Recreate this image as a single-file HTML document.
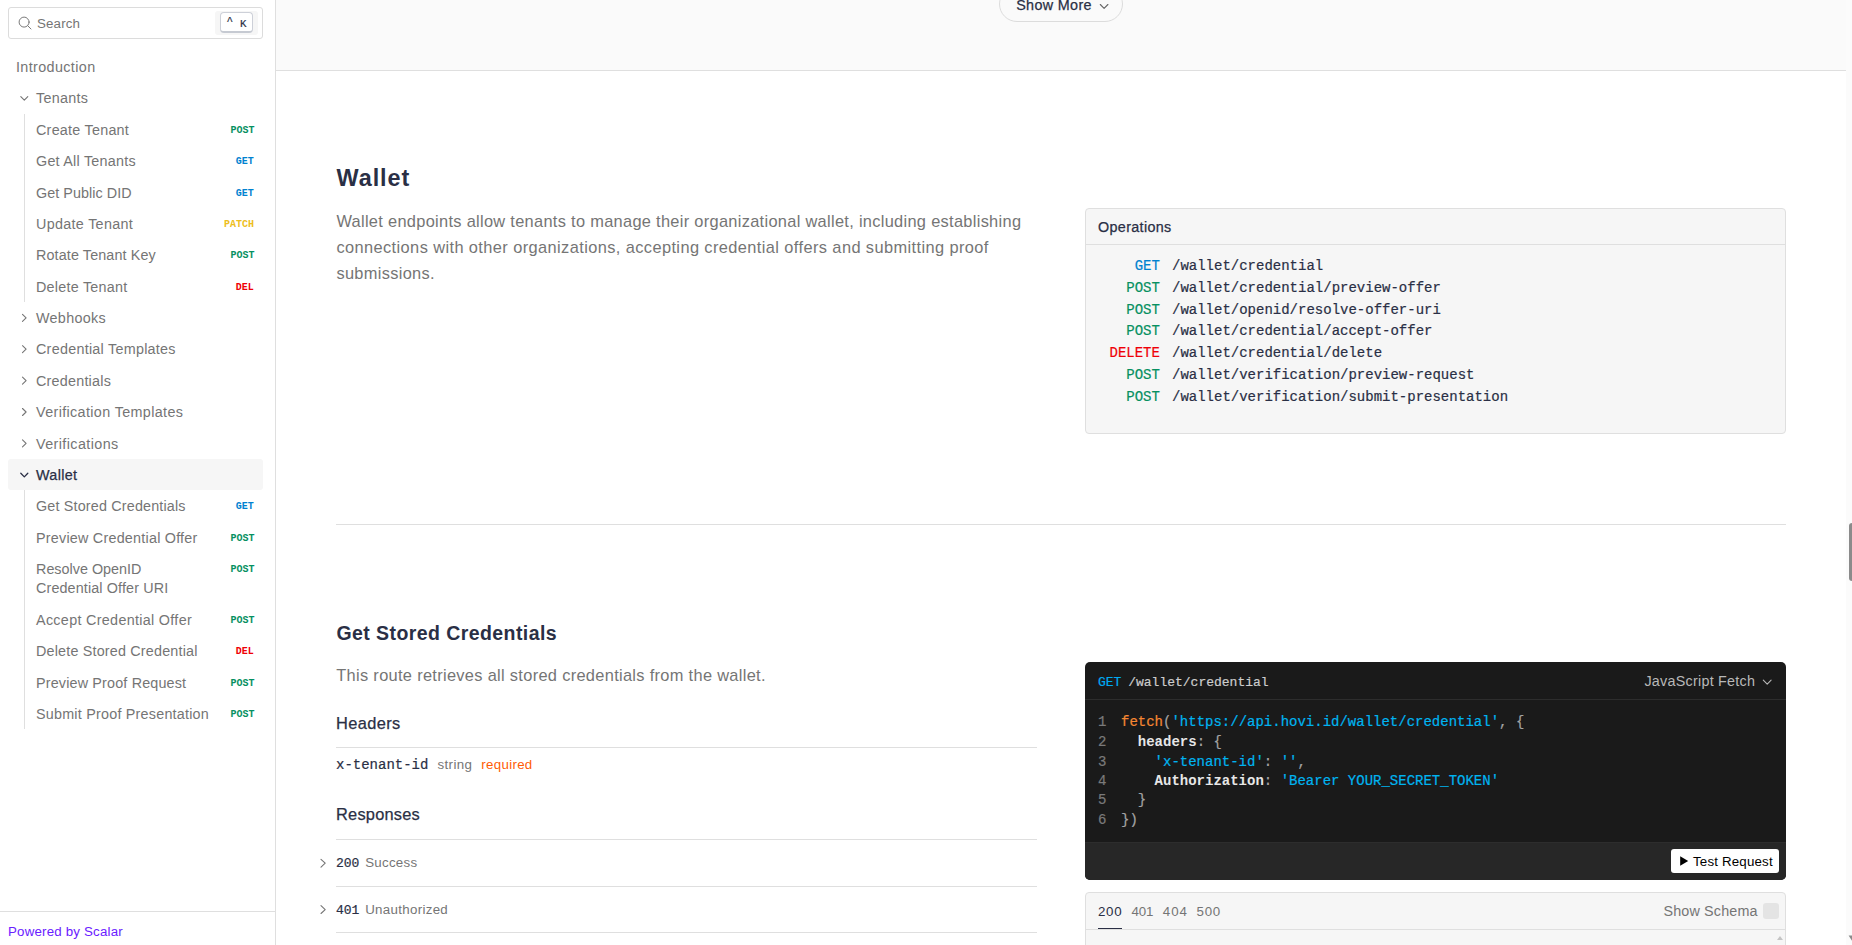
<!DOCTYPE html>
<html lang="en">
<head>
<meta charset="utf-8">
<title>Hovi API Reference</title>
<style>
*{box-sizing:border-box;margin:0;padding:0}
html,body{width:1852px;height:945px;overflow:hidden;background:#fff}
body{position:relative;font-family:"Liberation Sans",sans-serif;color:#2a2f45}
.t{position:absolute;white-space:pre;line-height:20px;height:20px}
.m{font-family:"Liberation Mono",monospace;-webkit-text-stroke:0.2px}
.m.b,.m .b{-webkit-text-stroke:0}
.b{font-weight:bold}
.box{position:absolute}
.hr{position:absolute;height:1px;background:#dfdfdf}
svg{position:absolute;overflow:visible}
#sidebar{left:0;top:0;width:276px;height:945px;border-right:1px solid #dfdfdf;background:#fff}
#search{left:8px;top:7px;width:255px;height:32px;border:1px solid #dcdcdc;border-radius:3px;background:#fff}
#kbdwrap{left:215px;top:11px;width:43px;height:24px;background:#f6f6f6;border-radius:3px}
#kbd{left:220px;top:12px;width:33px;height:21px;background:#fff;border:1px solid #cdd0d8;border-bottom:2px solid #c6cad2;border-radius:4px}
#active{left:8px;top:459.3px;width:255px;height:30.7px;background:#f6f6f6;border-radius:3px}
.vl{position:absolute;left:24px;width:1px;background:#dfdfdf}
#foot{left:0;top:911px;width:275px;height:1px;background:#dfdfdf}
#topgray{left:276px;top:0;width:1570px;height:71px;background:#fafafa;border-bottom:1px solid #dfdfdf}
#showmore{left:999px;top:-14px;width:124px;height:36px;border:1px solid #dcdcdc;border-radius:18px;background:#fafafa}
#ops{left:1085px;top:208px;width:701px;height:226px;background:#f6f6f6;border:1px solid #dfdfdf;border-radius:4px}
#opsline{left:1086px;top:244px;width:699px}
#code{left:1085px;top:662px;width:701px;height:218px;background:#1a1a1a;border-radius:5px;overflow:hidden}
#codehr{left:0;top:37px;width:701px;height:1px;background:#2d2d2d;position:absolute}
#codefoot{left:0;top:180px;width:701px;height:38px;background:#272727;border-top:1px solid #2d2d2d;position:absolute}
#testbtn{left:1671px;top:849px;width:108px;height:24px;background:#fff;border-radius:3px}
#resp{left:1085px;top:892px;width:701px;height:70px;background:#f6f6f6;border:1px solid #dfdfdf;border-radius:4px}
#resphr{left:1086px;top:929px;width:699px}
#tabul{left:1098px;top:928px;width:24px;height:1px;background:#2a2f45}
#chk{left:1763px;top:903px;width:16px;height:16px;background:#e4e4e4;border-radius:3px}
#sbtrack{left:1846px;top:0;width:6px;height:945px;background:#fbfbfb}
#sbthumb{left:1849px;top:523px;width:8px;height:58px;background:#8b8b8b;border-radius:3px}
</style>
</head>
<body>

<nav id="sidebar" class="box">
<div id="search" class="box"></div><div id="kbdwrap" class="box"></div><div id="kbd" class="box"></div>
<svg style="left:17.6px;top:16.4px" width="14" height="14" viewBox="0 0 14 14" fill="none" stroke="#7a7a7a" stroke-width="1" stroke-linecap="round"><circle cx="6.1" cy="6.1" r="5"/><path d="M9.8 9.8L13 13"/></svg>
<div id="active" class="box"></div>
<div class="vl" style="top:114px;height:188px"></div><div class="vl" style="top:490px;height:239px"></div>
<svg style="left:0;top:0" width="1" height="1"><path d="M20.80 96.59L24.30 100.19L27.80 96.59" fill="none" stroke="#757575" stroke-width="1.1" stroke-linecap="round" stroke-linejoin="round"/></svg>
<svg style="left:0;top:0" width="1" height="1"><path d="M22.50 314.32L26.10 317.82L22.50 321.32" fill="none" stroke="#757575" stroke-width="1.1" stroke-linecap="round" stroke-linejoin="round"/></svg>
<svg style="left:0;top:0" width="1" height="1"><path d="M22.50 345.71L26.10 349.21L22.50 352.71" fill="none" stroke="#757575" stroke-width="1.1" stroke-linecap="round" stroke-linejoin="round"/></svg>
<svg style="left:0;top:0" width="1" height="1"><path d="M22.50 377.10L26.10 380.60L22.50 384.10" fill="none" stroke="#757575" stroke-width="1.1" stroke-linecap="round" stroke-linejoin="round"/></svg>
<svg style="left:0;top:0" width="1" height="1"><path d="M22.50 408.49L26.10 411.99L22.50 415.49" fill="none" stroke="#757575" stroke-width="1.1" stroke-linecap="round" stroke-linejoin="round"/></svg>
<svg style="left:0;top:0" width="1" height="1"><path d="M22.50 439.88L26.10 443.38L22.50 446.88" fill="none" stroke="#757575" stroke-width="1.1" stroke-linecap="round" stroke-linejoin="round"/></svg>
<svg style="left:0;top:0" width="1" height="1"><path d="M20.80 473.27L24.30 476.87L27.80 473.27" fill="none" stroke="#2a2f45" stroke-width="1.3" stroke-linecap="round" stroke-linejoin="round"/></svg>
<span class="t" style="left:37.00px;top:14.00px;font-size:13.32px;letter-spacing:0.159px;color:#757575">Search</span>
<span class="t m" style="left:226.40px;top:11.00px;font-size:11px;color:#2a2f45">^</span>
<span class="t m" style="left:240.00px;top:14.00px;font-size:10.8px;letter-spacing:-0.484px;color:#2a2f45">K</span>
<div id="navitems">
<span class="t" style="left:16.00px;top:57.00px;font-size:14.35px;letter-spacing:0.38px;color:#757575">Introduction</span>
<span class="t" style="left:36.00px;top:88.00px;font-size:14.35px;letter-spacing:0.299px;color:#757575">Tenants</span>
<span class="t" style="left:36.00px;top:120.00px;font-size:14.35px;letter-spacing:0.248px;color:#757575">Create Tenant</span>
<span class="t m b" style="transform:scaleX(0.9089);transform-origin:100% 50%;left:227.59px;top:119.60px;font-size:11px;color:#069061">POST</span>
<span class="t" style="left:36.00px;top:151.00px;font-size:14.35px;letter-spacing:0.243px;color:#757575">Get All Tenants</span>
<span class="t m b" style="transform:scaleX(0.9085);transform-origin:100% 50%;left:234.19px;top:150.60px;font-size:11px;color:#0082d0">GET</span>
<span class="t" style="left:36.00px;top:183.00px;font-size:14.35px;letter-spacing:0.054px;color:#757575">Get Public DID</span>
<span class="t m b" style="transform:scaleX(0.9085);transform-origin:100% 50%;left:234.19px;top:182.60px;font-size:11px;color:#0082d0">GET</span>
<span class="t" style="left:36.00px;top:214.00px;font-size:14.35px;letter-spacing:0.309px;color:#757575">Update Tenant</span>
<span class="t m b" style="transform:scaleX(0.9087);transform-origin:100% 50%;left:220.98px;top:213.60px;font-size:11px;color:#edbe20">PATCH</span>
<span class="t" style="left:36.00px;top:245.00px;font-size:14.35px;letter-spacing:0.125px;color:#757575">Rotate Tenant Key</span>
<span class="t m b" style="transform:scaleX(0.9089);transform-origin:100% 50%;left:227.59px;top:244.60px;font-size:11px;color:#069061">POST</span>
<span class="t" style="left:36.00px;top:277.00px;font-size:14.35px;letter-spacing:0.245px;color:#757575">Delete Tenant</span>
<span class="t m b" style="transform:scaleX(0.9085);transform-origin:100% 50%;left:234.19px;top:276.60px;font-size:11px;color:#ef0006">DEL</span>
<span class="t" style="left:36.00px;top:308.00px;font-size:14.35px;letter-spacing:0.307px;color:#757575">Webhooks</span>
<span class="t" style="left:36.00px;top:339.00px;font-size:14.35px;letter-spacing:0.265px;color:#757575">Credential Templates</span>
<span class="t" style="left:36.00px;top:371.00px;font-size:14.35px;letter-spacing:0.226px;color:#757575">Credentials</span>
<span class="t" style="left:36.00px;top:402.00px;font-size:14.35px;letter-spacing:0.366px;color:#757575">Verification Templates</span>
<span class="t" style="left:36.00px;top:434.00px;font-size:14.35px;letter-spacing:0.404px;color:#757575">Verifications</span>
<span class="t" style="left:36.00px;top:465.00px;font-size:14.35px;letter-spacing:0.328px;color:#2a2f45;-webkit-text-stroke:0.25px #2a2f45">Wallet</span>
<span class="t" style="left:36.00px;top:496.00px;font-size:14.35px;letter-spacing:0.173px;color:#757575">Get Stored Credentials</span>
<span class="t m b" style="transform:scaleX(0.9085);transform-origin:100% 50%;left:234.19px;top:495.60px;font-size:11px;color:#0082d0">GET</span>
<span class="t" style="left:36.00px;top:528.00px;font-size:14.35px;letter-spacing:0.232px;color:#757575">Preview Credential Offer</span>
<span class="t m b" style="transform:scaleX(0.9089);transform-origin:100% 50%;left:227.59px;top:527.60px;font-size:11px;color:#069061">POST</span>
<span class="t" style="left:36.00px;top:559.00px;font-size:14.35px;letter-spacing:0.017px;color:#757575">Resolve OpenID</span>
<span class="t m b" style="transform:scaleX(0.9089);transform-origin:100% 50%;left:227.59px;top:558.60px;font-size:11px;color:#069061">POST</span>
<span class="t" style="left:36.00px;top:578.00px;font-size:14.35px;letter-spacing:0.129px;color:#757575">Credential Offer URI</span>
<span class="t" style="left:36.00px;top:610.00px;font-size:14.35px;letter-spacing:0.314px;color:#757575">Accept Credential Offer</span>
<span class="t m b" style="transform:scaleX(0.9089);transform-origin:100% 50%;left:227.59px;top:609.60px;font-size:11px;color:#069061">POST</span>
<span class="t" style="left:36.00px;top:641.00px;font-size:14.35px;letter-spacing:0.186px;color:#757575">Delete Stored Credential</span>
<span class="t m b" style="transform:scaleX(0.9085);transform-origin:100% 50%;left:234.19px;top:640.60px;font-size:11px;color:#ef0006">DEL</span>
<span class="t" style="left:36.00px;top:673.00px;font-size:14.35px;letter-spacing:0.17px;color:#757575">Preview Proof Request</span>
<span class="t m b" style="transform:scaleX(0.9089);transform-origin:100% 50%;left:227.59px;top:672.60px;font-size:11px;color:#069061">POST</span>
<span class="t" style="left:36.00px;top:704.00px;font-size:14.35px;letter-spacing:0.223px;color:#757575">Submit Proof Presentation</span>
<span class="t m b" style="transform:scaleX(0.9089);transform-origin:100% 50%;left:227.59px;top:703.60px;font-size:11px;color:#069061">POST</span>
</div>
<div id="foot" class="box"></div>
<span class="t" style="left:8.00px;top:922.00px;font-size:13.32px;letter-spacing:0.184px;color:#6a20ff">Powered by Scalar</span>
</nav>
<main>
<div id="topgray" class="box"></div><div id="showmore" class="box"></div>
<svg style="left:0;top:0" width="1" height="1"><path d="M1100.3 4.5L1104.1 8.3L1107.9 4.5" fill="none" stroke="#666" stroke-width="1.1" stroke-linecap="round" stroke-linejoin="round"/></svg>
<div id="ops" class="box"></div><div id="opsline" class="hr"></div>
<div class="hr" style="left:336px;top:524px;width:1450px"></div>
<div class="hr" style="left:336px;top:747px;width:701px"></div>
<div class="hr" style="left:336px;top:839px;width:701px"></div>
<div class="hr" style="left:336px;top:886px;width:701px"></div>
<div class="hr" style="left:336px;top:932px;width:701px"></div>
<svg style="left:0;top:0" width="1" height="1"><path d="M321 859.3L325.2 863.2L321 867.1" fill="none" stroke="#757575" stroke-width="1.1" stroke-linecap="round" stroke-linejoin="round"/></svg>
<svg style="left:0;top:0" width="1" height="1"><path d="M321 905.7L325.2 909.6L321 913.5" fill="none" stroke="#757575" stroke-width="1.1" stroke-linecap="round" stroke-linejoin="round"/></svg>
<div id="code" class="box"><div id="codehr"></div><div id="codefoot"></div></div>
<div id="testbtn" class="box"></div>
<svg style="left:0;top:0" width="1" height="1"><path d="M1680.2 856.2L1688.2 861L1680.2 865.8Z" fill="#000"/></svg>
<svg style="left:0;top:0" width="1" height="1"><path d="M1763.3 680.2L1767.2 684.1L1771.1 680.2" fill="none" stroke="#b8b8b8" stroke-width="1.1" stroke-linecap="round" stroke-linejoin="round"/></svg>
<div id="resp" class="box"></div><div id="resphr" class="hr"></div><div id="tabul" class="box"></div><div id="chk" class="box"></div>
<svg style="left:0;top:0" width="1" height="1"><path d="M1777 940L1780 936L1783 940Z" fill="#c4c4c4"/></svg>
<span class="t" style="left:1016.20px;top:-5.00px;font-size:14.35px;letter-spacing:0.344px;color:#2a2f45;-webkit-text-stroke:0.25px #2a2f45">Show More</span>
<span class="t b" style="left:336.60px;top:168.00px;font-size:23.4px;letter-spacing:0.922px;color:#2a2f45">Wallet</span>
<span class="t" style="left:336.40px;top:211.00px;font-size:16.4px;letter-spacing:0.301px;color:#757575">Wallet endpoints allow tenants to manage their organizational wallet, including establishing</span>
<span class="t" style="left:336.40px;top:237.00px;font-size:16.4px;letter-spacing:0.396px;color:#757575">connections with other organizations, accepting credential offers and submitting proof</span>
<span class="t" style="left:336.40px;top:263.00px;font-size:16.4px;letter-spacing:0.311px;color:#757575">submissions.</span>
<span class="t" style="left:1098.00px;top:217.00px;font-size:14.35px;letter-spacing:0.345px;color:#2a2f45;-webkit-text-stroke:0.25px #2a2f45">Operations</span>
<span class="t m" style="left:1134.70px;top:256.00px;font-size:14px;letter-spacing:-0.005px;color:#0082d0">GET</span>
<span class="t m" style="left:1172.00px;top:256.00px;font-size:14px;color:#2a2f45">/wallet/credential</span>
<span class="t m" style="left:1126.29px;top:278.00px;font-size:14px;color:#069061">POST</span>
<span class="t m" style="left:1172.00px;top:278.00px;font-size:14px;color:#2a2f45">/wallet/credential/preview-offer</span>
<span class="t m" style="left:1126.29px;top:300.00px;font-size:14px;color:#069061">POST</span>
<span class="t m" style="left:1172.00px;top:300.00px;font-size:14px;color:#2a2f45">/wallet/openid/resolve-offer-uri</span>
<span class="t m" style="left:1126.29px;top:321.00px;font-size:14px;color:#069061">POST</span>
<span class="t m" style="left:1172.00px;top:321.00px;font-size:14px;color:#2a2f45">/wallet/credential/accept-offer</span>
<span class="t m" style="left:1109.50px;top:343.00px;font-size:14px;color:#ef0006">DELETE</span>
<span class="t m" style="left:1172.00px;top:343.00px;font-size:14px;color:#2a2f45">/wallet/credential/delete</span>
<span class="t m" style="left:1126.29px;top:365.00px;font-size:14px;color:#069061">POST</span>
<span class="t m" style="left:1172.00px;top:365.00px;font-size:14px;color:#2a2f45">/wallet/verification/preview-request</span>
<span class="t m" style="left:1126.29px;top:387.00px;font-size:14px;color:#069061">POST</span>
<span class="t m" style="left:1172.00px;top:387.00px;font-size:14px;color:#2a2f45">/wallet/verification/submit-presentation</span>
<span class="t b" style="left:336.40px;top:623.00px;font-size:19.5px;letter-spacing:0.427px;color:#2a2f45">Get Stored Credentials</span>
<span class="t" style="left:336.30px;top:665.00px;font-size:16.4px;letter-spacing:0.311px;color:#757575">This route retrieves all stored credentials from the wallet.</span>
<span class="t" style="left:336.00px;top:713.00px;font-size:16.4px;letter-spacing:0.386px;color:#2a2f45;-webkit-text-stroke:0.25px #2a2f45">Headers</span>
<span class="t m" style="left:336.00px;top:755.00px;font-size:14px;color:#2a2f45">x-tenant-id</span>
<span class="t" style="left:437.40px;top:755.00px;font-size:13.32px;letter-spacing:0.409px;color:#757575">string</span>
<span class="t" style="left:481.30px;top:755.00px;font-size:13.32px;letter-spacing:0.305px;color:#ff5c05">required</span>
<span class="t" style="left:336.00px;top:804.00px;font-size:16.4px;letter-spacing:0.219px;color:#2a2f45;-webkit-text-stroke:0.25px #2a2f45">Responses</span>
<span class="t m" style="left:336.00px;top:854.00px;font-size:13px;color:#2a2f45">200</span>
<span class="t" style="left:365.20px;top:853.00px;font-size:13.32px;letter-spacing:0.268px;color:#757575">Success</span>
<span class="t m" style="left:336.00px;top:901.00px;font-size:13px;color:#2a2f45">401</span>
<span class="t" style="left:365.20px;top:900.00px;font-size:13.32px;letter-spacing:0.306px;color:#757575">Unauthorized</span>
<span class="t m" style="left:1098.00px;top:673.00px;font-size:13px;color:#00aaf2">GET</span>
<span class="t m" style="left:1128.20px;top:673.00px;font-size:13px;color:#cdcdcd">/wallet/credential</span>
<span class="t" style="left:1644.40px;top:671.00px;font-size:14.35px;letter-spacing:0.252px;color:#b8b8b8">JavaScript Fetch</span>
<span class="t" style="left:1693.00px;top:852.00px;font-size:13.32px;letter-spacing:0.177px;color:#000">Test Request</span>
<span class="t" style="left:1098.00px;top:902.00px;font-size:13.32px;letter-spacing:0.708px;color:#2a2f45">200</span>
<span class="t" style="left:1131.40px;top:902.00px;font-size:13.32px;letter-spacing:-0.109px;color:#757575">401</span>
<span class="t" style="left:1162.80px;top:902.00px;font-size:13.32px;letter-spacing:0.927px;color:#757575">404</span>
<span class="t" style="left:1196.60px;top:902.00px;font-size:13.32px;letter-spacing:0.698px;color:#757575">500</span>
<span class="t" style="left:1663.40px;top:901.00px;font-size:14.35px;letter-spacing:0.168px;color:#757575">Show Schema</span>
<span class="t m" style="left:1100.50px;top:941.00px;font-size:13px;color:#757575">{</span>
<span class="t m" style="left:1098px;top:712.00px;font-size:14px;color:#7a7a7a">1</span>
<code class="t m" style="left:1121px;top:712.00px;font-size:14px"><span style="color:#f58732">fetch</span><span style="color:#a4a4a4">(</span><span style="color:#00b4f0">&#x27;https://api.hovi.id/wallet/credential&#x27;</span><span style="color:#a4a4a4">, {</span></code>
<span class="t m" style="left:1098px;top:732.00px;font-size:14px;color:#7a7a7a">2</span>
<code class="t m" style="left:1121px;top:732.00px;font-size:14px"><span style="color:#a4a4a4">  </span><span style="color:#e7e7e7;font-weight:bold;-webkit-text-stroke:0">headers</span><span style="color:#a4a4a4">: {</span></code>
<span class="t m" style="left:1098px;top:752.00px;font-size:14px;color:#7a7a7a">3</span>
<code class="t m" style="left:1121px;top:752.00px;font-size:14px"><span style="color:#a4a4a4">    </span><span style="color:#00b4f0">&#x27;x-tenant-id&#x27;</span><span style="color:#a4a4a4">: </span><span style="color:#00b4f0">&#x27;&#x27;</span><span style="color:#a4a4a4">,</span></code>
<span class="t m" style="left:1098px;top:771.00px;font-size:14px;color:#7a7a7a">4</span>
<code class="t m" style="left:1121px;top:771.00px;font-size:14px"><span style="color:#a4a4a4">    </span><span style="color:#e7e7e7;font-weight:bold;-webkit-text-stroke:0">Authorization</span><span style="color:#a4a4a4">: </span><span style="color:#00b4f0">&#x27;Bearer YOUR_SECRET_TOKEN&#x27;</span></code>
<span class="t m" style="left:1098px;top:790.00px;font-size:14px;color:#7a7a7a">5</span>
<code class="t m" style="left:1121px;top:790.00px;font-size:14px"><span style="color:#a4a4a4">  }</span></code>
<span class="t m" style="left:1098px;top:810.00px;font-size:14px;color:#7a7a7a">6</span>
<code class="t m" style="left:1121px;top:810.00px;font-size:14px"><span style="color:#a4a4a4">})</span></code>
</main>
<div id="sbtrack" class="box"></div><div id="sbthumb" class="box"></div>
<svg style="left:0;top:0" width="1" height="1"><path d="M1848.6 935.6L1858 935.6L1853.3 942.6Z" fill="#8b8b8b"/></svg>
</body></html>
